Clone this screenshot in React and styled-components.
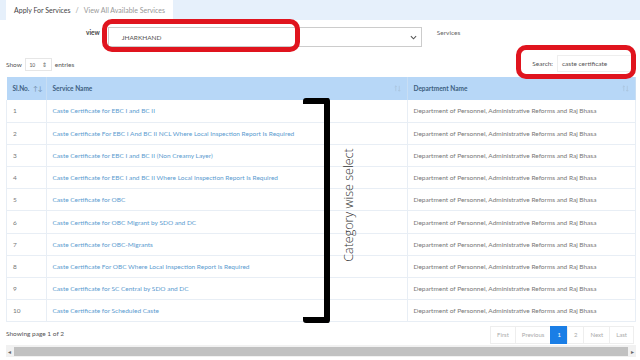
import styled, { createGlobalStyle } from 'styled-components';

const GlobalStyle = createGlobalStyle`
    html, body {
        margin: 0;
        padding: 0;
        background: #ffffff;
    }
    body {
        font-family: "Lato", "Open Sans", sans-serif;
        color: #555;
    }
`

const rows = [
    'Caste Certificate for EBC I and BC II',
    'Caste Certificate For EBC I And BC II NCL Where Local Inspection Report Is Required',
    'Caste Certificate for EBC I and BC II (Non Creamy Layer)',
    'Caste Certificate for EBC I and BC II Where Local Inspection Report Is Required',
    'Caste Certificate for OBC',
    'Caste Certificate for OBC Migrant by SDO and DC',
    'Caste Certificate for OBC-Migrants',
    'Caste Certificate For OBC Where Local Inspection Report Is Required',
    'Caste Certificate for SC Central by SDO and DC',
    'Caste Certificate for Scheduled Caste',
];

const DEPT = 'Department of Personnel, Administrative Reforms and Raj Bhasa';

const SortIcon = () => (
    <svg width="7" height="7" viewBox="0 0 8 8">
        <path d="M2 1 L2 7 M0.8 2.2 L2 1 L3.2 2.2" stroke="#a9c2da" strokeWidth="0.8" fill="none" />
        <path d="M6 1 L6 7 M4.8 5.8 L6 7 L7.2 5.8" stroke="#a9c2da" strokeWidth="0.8" fill="none" />
    </svg>
)

const App = () => {
    return (
        <Page>
            <GlobalStyle />
            <TopBar>
                <Crumbs>
                    <span className='first'>Apply For Services</span>
                    <span className='sep'>/</span>
                    <span className='last'>View All Available Services</span>
                </Crumbs>
            </TopBar>

            <FilterRow>
                <Label>view</Label>
                <SelectBox>
                    <span>JHARKHAND</span>
                    <svg width="7" height="5" viewBox="0 0 8 5">
                        <path d="M1 1 L4 4 L7 1" stroke="#555" strokeWidth="1.2" fill="none" />
                    </svg>
                </SelectBox>
                <Label $light>Services</Label>
            </FilterRow>

            <ControlRow>
                <Length>
                    Show
                    <SmallSelect>
                        <span>10</span>
                        <span className='arr'>⇕</span>
                    </SmallSelect>
                    entries
                </Length>
                <Search>
                    Search:
                    <SearchInput>caste certificate</SearchInput>
                </Search>
            </ControlRow>

            <Table>
                <thead>
                    <tr>
                        <Th $w="33px" $pr="0">Sl.No. <span className='s'>↑↓</span></Th>
                        <Th $w="348px">
                            <HeadCell>Service Name <SortIcon /></HeadCell>
                        </Th>
                        <Th>
                            <HeadCell>Department Name <SortIcon /></HeadCell>
                        </Th>
                    </tr>
                </thead>
                <tbody>
                    {rows.map((name, i) => (
                        <tr key={i}>
                            <Td>{i + 1}</Td>
                            <Td $link>{name}</Td>
                            <Td $dept>{DEPT}</Td>
                        </tr>
                    ))}
                </tbody>
            </Table>

            <Footer>
                <span>Showing page 1 of 2</span>
                <Pager>
                    <PageBtn>First</PageBtn>
                    <PageBtn>Previous</PageBtn>
                    <PageBtn $active>1</PageBtn>
                    <PageBtn>2</PageBtn>
                    <PageBtn>Next</PageBtn>
                    <PageBtn>Last</PageBtn>
                </Pager>
            </Footer>

            <ScrollBar>
                <span className='arrow'>◂</span>
                <div className='thumb' />
                <span className='arrow'>▸</span>
            </ScrollBar>

            {/* annotations drawn over the page */}
            <RedMark $x={102} $y={19} $w={198} $h={33} />
            <RedMark $x={516} $y={45} $w={120} $h={34} />
            <Bracket />
            <Note>Category wise select</Note>
        </Page>
    )
}

const Page = styled.div`
    position: relative;
    width: 640px;
    height: 360px;
    overflow: hidden;
    background: #fff;
`

const TopBar = styled.div`
    height: 20px;
    background: #e6f0fb;
    padding-left: 6px;
    display: flex;
`

const Crumbs = styled.div`
    background: #fff;
    padding: 0 8px;
    display: flex;
    align-items: center;
    gap: 5px;
    font-size: 7px;
    .first { color: #444; }
    .sep { color: #999; }
    .last { color: #999; }
`

const FilterRow = styled.div`
    display: flex;
    align-items: flex-start;
    height: 32px;
    padding-top: 7px;
    box-sizing: border-box;
`

const Label = styled.div`
    font-size: 6.5px;
    font-weight: ${p => p.$light ? 'normal' : 'bold'};
    color: ${p => p.$light ? '#666' : '#444'};
    margin: ${p => p.$light ? '2px 0 0 15px' : '2px 8px 0 86px'};
`

const SelectBox = styled.div`
    width: 314px;
    height: 20px;
    box-sizing: border-box;
    border: 1px solid #ccc;
    display: flex;
    align-items: center;
    justify-content: space-between;
    padding: 0 4px 0 13px;
    font-size: 6.5px;
    color: #555;
`

const ControlRow = styled.div`
    display: flex;
    justify-content: space-between;
    align-items: center;
    height: 25px;
    padding: 0 6px;
`

const Length = styled.div`
    display: flex;
    align-items: center;
    gap: 3px;
    font-size: 6.5px;
    color: #555;
`

const SmallSelect = styled.div`
    width: 27px;
    height: 13px;
    box-sizing: border-box;
    border: 1px solid #e6e6e6;
    display: flex;
    align-items: center;
    justify-content: space-around;
    font-size: 5px;
    .arr { font-size: 6px; color: #666; }
`

const Search = styled.div`
    display: flex;
    align-items: center;
    gap: 4px;
    font-size: 6.5px;
    color: #555;
    margin-top: -2px;
`

const SearchInput = styled.div`
    width: 77px;
    height: 17px;
    box-sizing: border-box;
    border: 1px solid #eee;
    padding-left: 4px;
    display: flex;
    align-items: center;
    font-size: 6.5px;
    color: #555;
`

const Table = styled.table`
    margin: 0 4px 0 6px;
    width: 630px;
    border-collapse: collapse;
    table-layout: fixed;
    tbody tr { height: 22.2px; }
`

const Th = styled.th`
    width: ${p => p.$w || 'auto'};
    height: 23px;
    background: #b7d7f7;
    text-align: left;
    padding: 0 ${p => p.$pr ?? '6px'} 0 6px;
    font-size: 6.5px;
    font-weight: bold;
    color: #3d5f80;
    white-space: nowrap;
    border-right: 1px solid #c8def4;
    .s { color: #6c8aa8; font-weight: normal; margin-left: 2px; }
`

const HeadCell = styled.div`
    display: flex;
    justify-content: space-between;
    align-items: center;
`

const Td = styled.td`
    padding: 0 6px;
    font-size: 6.5px;
    color: ${p => p.$link ? '#5b9bcf' : '#777'};
    border-bottom: 1px solid #e8eef5;
    border-right: 1px solid #e8eef5;
    border-left: ${p => p.$link || p.$dept ? 'none' : '1px solid #e8eef5'};
    white-space: nowrap;
    overflow: hidden;
`

const Footer = styled.div`
    display: flex;
    justify-content: space-between;
    align-items: center;
    height: 23px;
    padding: 0 6px;
    font-size: 6.5px;
    color: #555;
`

const Pager = styled.div`
    display: flex;
    margin-top: 2px;
`

const PageBtn = styled.div`
    height: 16px;
    padding: 0 6px;
    display: flex;
    align-items: center;
    font-size: 6px;
    color: ${p => p.$active ? '#fff' : '#aaa'};
    background: ${p => p.$active ? '#1a7ee6' : '#fff'};
    border: 1px solid ${p => p.$active ? '#1a7ee6' : '#eee'};
    margin-left: -1px;
`

const ScrollBar = styled.div`
    margin: 0 4px 0 6px;
    height: 12px;
    background: #f1f1f1;
    display: flex;
    align-items: center;
    gap: 3px;
    padding: 0 2px;
    .arrow { font-size: 6px; color: #666; }
    .thumb { flex: 1; height: 9px; background: #c1c1c1; }
`

const RedMark = styled.div`
    position: absolute;
    left: ${p => p.$x}px;
    top: ${p => p.$y}px;
    width: ${p => p.$w}px;
    height: ${p => p.$h}px;
    box-sizing: border-box;
    border: 5px solid #e0141e;
    border-radius: 10px;
`

const Bracket = styled.div`
    position: absolute;
    left: 303px;
    top: 98px;
    width: 27px;
    height: 225px;
    box-sizing: border-box;
    border: 6px solid #000;
    border-left: none;
    border-radius: 3px;
`

const Note = styled.div`
    position: absolute;
    left: 348px;
    top: 205px;
    transform: translate(-50%, -50%) rotate(-90deg);
    white-space: nowrap;
    font-family: "Open Sans", sans-serif;
    font-weight: 300;
    font-size: 12.5px;
    color: #333;
`

export default App;
